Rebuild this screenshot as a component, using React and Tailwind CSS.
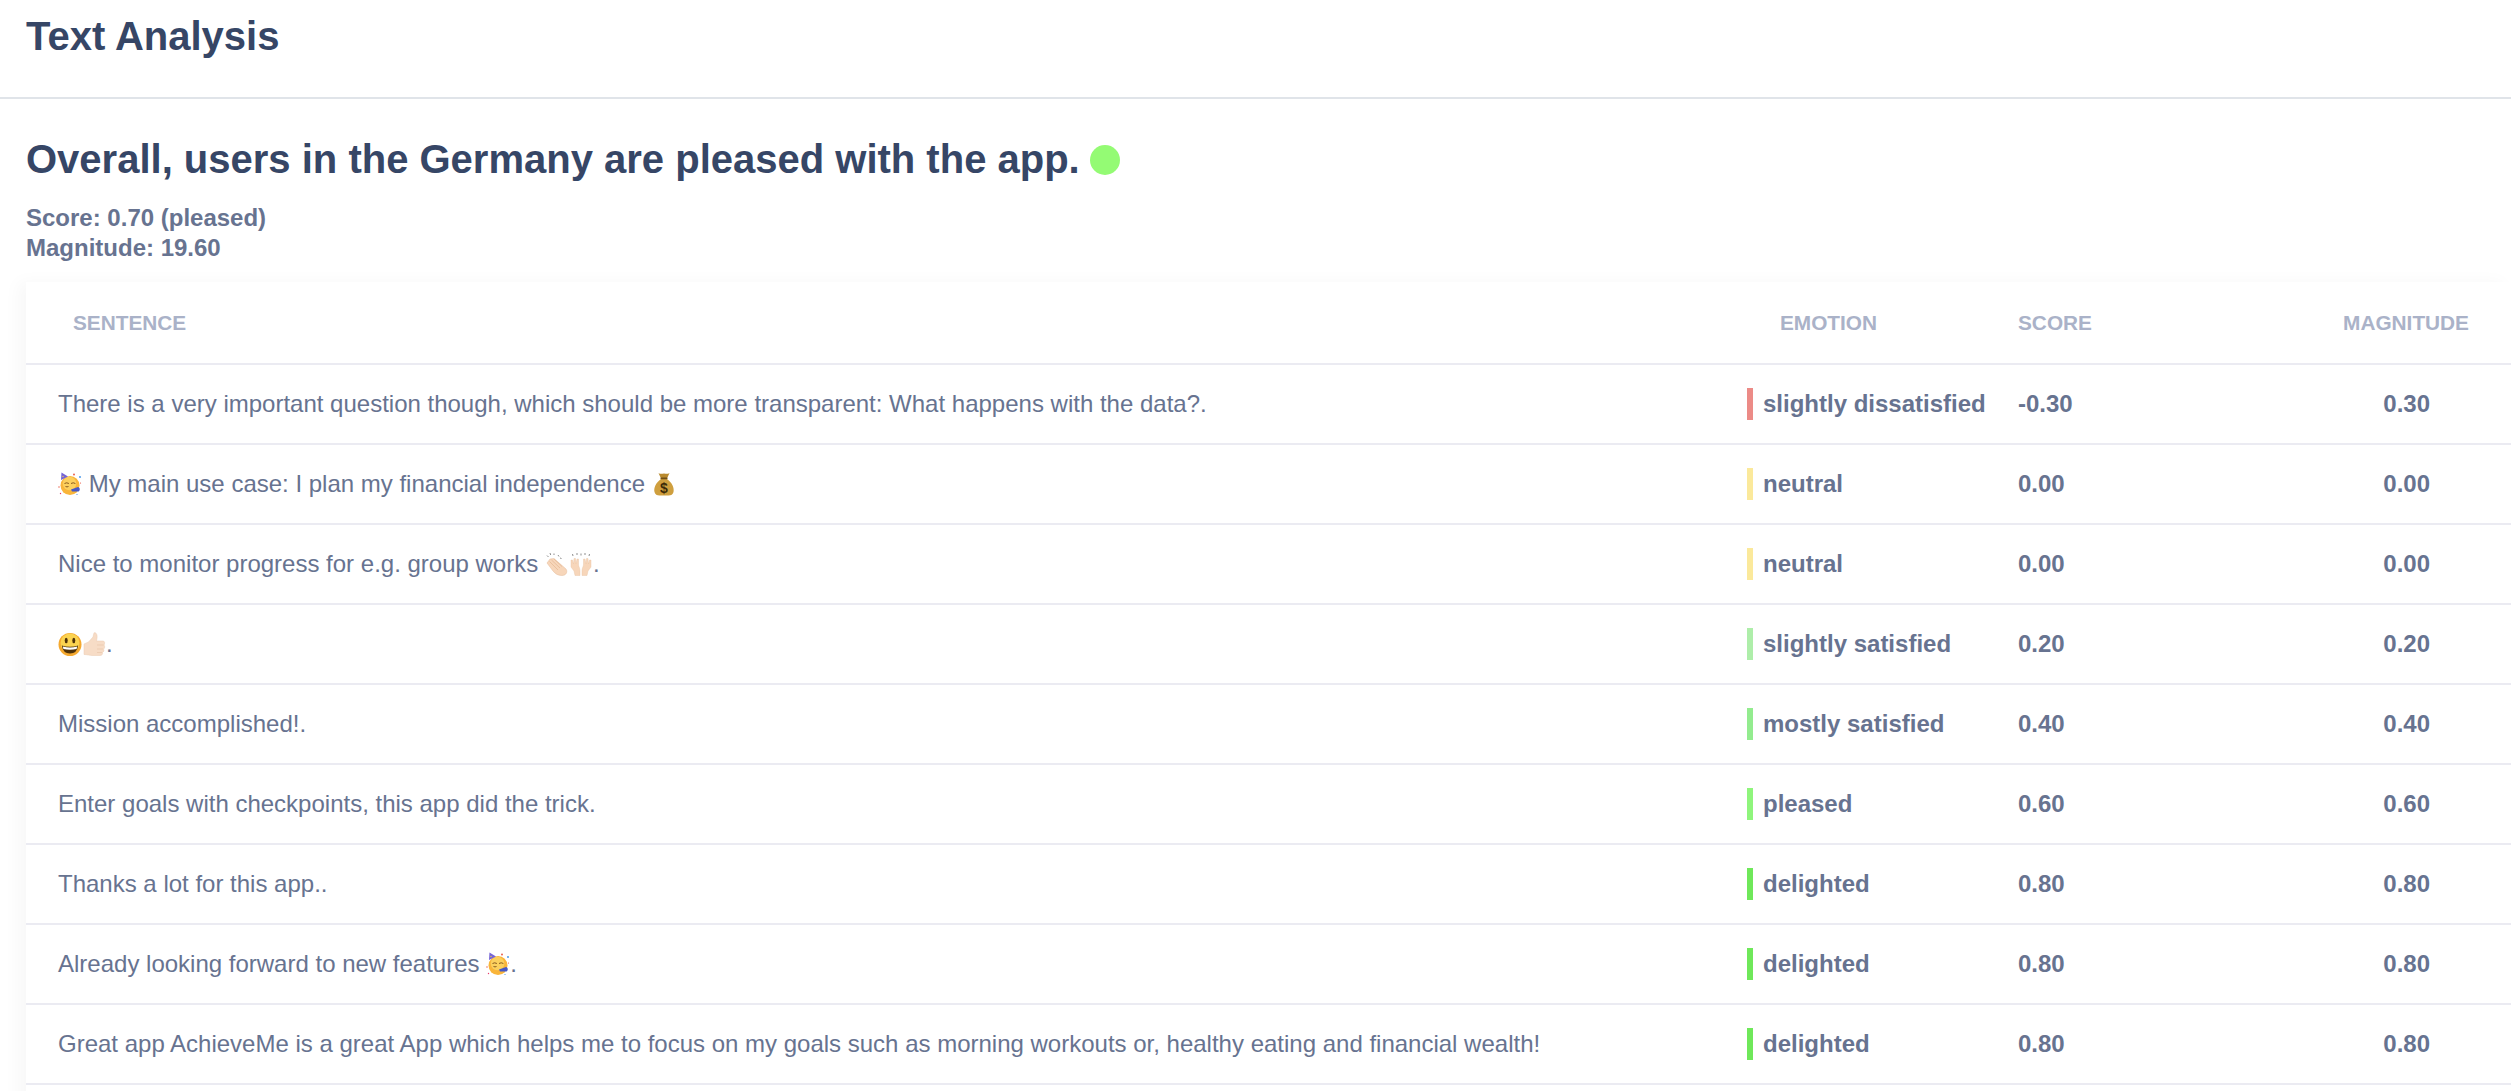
const rows = [
  { text: <>There is a very important question though, which should be more transparent: What happens with the data?.</>, emotion: "slightly dissatisfied", bar: "bg-[#ec8b87]", score: "-0.30", magnitude: "0.30" },
  { text: <><PartyFace /> My main use case: I plan my financial independence <MoneyBag /></>, emotion: "neutral", bar: "bg-[#fbe99b]", score: "0.00", magnitude: "0.00" },
  { text: <>Nice to monitor progress for e.g. group works <Clap /><Hands />.</>, emotion: "neutral", bar: "bg-[#fbe99b]", score: "0.00", magnitude: "0.00" },
  { text: <><Smiley /><Thumb />.</>, emotion: "slightly satisfied", bar: "bg-[#aeeeaa]", score: "0.20", magnitude: "0.20" },
  { text: <>Mission accomplished!.</>, emotion: "mostly satisfied", bar: "bg-[#93ec8f]", score: "0.40", magnitude: "0.40" },
  { text: <>Enter goals with checkpoints, this app did the trick.</>, emotion: "pleased", bar: "bg-[#8ff57c]", score: "0.60", magnitude: "0.60" },
  { text: <>Thanks a lot for this app..</>, emotion: "delighted", bar: "bg-[#6fe85a]", score: "0.80", magnitude: "0.80" },
  { text: <>Already looking forward to new features <PartyFace />.</>, emotion: "delighted", bar: "bg-[#6fe85a]", score: "0.80", magnitude: "0.80" },
  { text: <>Great app AchieveMe is a great App which helps me to focus on my goals such as morning workouts or, healthy eating and financial wealth!</>, emotion: "delighted", bar: "bg-[#6fe85a]", score: "0.80", magnitude: "0.80" },
];

function Emoji({ children }) {
  return (
    <svg viewBox="0 0 24 24" className="inline-block w-6 h-6 align-[-4px]">
      {children}
    </svg>
  );
}

function PartyFace() {
  return (
    <Emoji>
      <circle cx="12" cy="13.5" r="9.5" fill="#f9b53a" />
      <circle cx="11.5" cy="11.5" r="6.8" fill="#fbd05e" />
      <path d="M3 8 L3.5 0.5 L10 4.5 Z" fill="#7564d6" />
      <circle cx="5" cy="4.5" r="0.7" fill="#f2d04a" />
      <path d="M6.5 11.5 q2.2 -1.4 4.4 0 M13 11.5 q2.2 -1.4 4.4 0" stroke="#7a4c16" strokeWidth="0.9" fill="none" />
      <path d="M7.5 14.5 q1.5 0.8 3 0" stroke="#7a4c16" strokeWidth="0.9" fill="none" />
      <path d="M13 17.5 L20 15 C22 15.5 22.5 18 20.5 19.5 L14 19.5 Z" fill="#4658c6" />
      <circle cx="16" cy="2.5" r="0.9" fill="#e8503a" />
      <circle cx="22" cy="5" r="0.9" fill="#3a8fe8" />
      <circle cx="22.5" cy="11" r="0.6" fill="#e8503a" />
      <circle cx="1" cy="15" r="0.7" fill="#e8503a" />
      <circle cx="2.5" cy="21.5" r="0.7" fill="#e83a6a" />
      <circle cx="19" cy="22.5" r="0.6" fill="#3a8fe8" />
    </Emoji>
  );
}

function MoneyBag() {
  return (
    <Emoji>
      <path d="M6.5 1 C9 2.5 10 1.5 12 1.5 C14 1.5 15 2.5 17.5 1 L15 6.5 L9 6.5 Z" fill="#b98a2e" />
      <path d="M9 7 L15 7 C20 10.5 22.5 16 21.5 20 C21 22.5 19 23.5 16.5 23.5 L7.5 23.5 C5 23.5 3 22.5 2.5 20 C1.5 16 4 10.5 9 7 Z" fill="#cf9f3e" />
      <rect x="8.5" y="5.6" width="7" height="1.6" rx="0.6" fill="#6f4e16" />
      <text x="12" y="21" textAnchor="middle" fontSize="14" fontWeight="700" fontFamily="Liberation Sans, sans-serif" fill="#3c2a08">$</text>
    </Emoji>
  );
}

function Clap() {
  return (
    <Emoji>
      <path d="M2 11 L5 7 L9 6.5 L21 17 C23 20 21 23.5 17 23.5 C13 23.5 10.5 22 8 19 Z" fill="#f7d6ba" stroke="#e5bb98" strokeWidth="0.5" />
      <path d="M4.5 9.5 L13 18 M6.5 8 L15 16 M9 7 L17 14.5" stroke="#e2b692" strokeWidth="0.7" />
      <path d="M2 3.5 l1.5 1.5 M5 1 l0.7 2 M9 1.5 l0 1.5 M13 3 l1 1.5 M15 6 l1.5 0.5" stroke="#8f8f8f" strokeWidth="1" />
    </Emoji>
  );
}

function Hands() {
  return (
    <Emoji>
      <path d="M2 8 L3.5 8 L4.5 12 L5 6.5 L6.5 6.5 L7 12 L8 7 L9.5 7 L9.5 13 C10 15 11 16.5 11 19 L11 23.5 L6 23.5 L5 19 L2 15 Z" fill="#f7d6ba" stroke="#e8c3a2" strokeWidth="0.4" />
      <path d="M22 8 L20.5 8 L19.5 12 L19 6.5 L17.5 6.5 L17 12 L16 7 L14.5 7 L14.5 13 C14 15 13 16.5 13 19 L13 23.5 L18 23.5 L19 19 L22 15 Z" fill="#f7d6ba" stroke="#e8c3a2" strokeWidth="0.4" />
      <path d="M3.5 2 l0.5 2 M8 1 l0 2 M12 1.5 l0 2 M16 1 l0 2 M20.5 2 l-0.5 2" stroke="#8f8f8f" strokeWidth="1" />
    </Emoji>
  );
}

function Smiley() {
  return (
    <Emoji>
      <circle cx="12" cy="12.5" r="11.5" fill="#f5a92f" />
      <circle cx="12" cy="11" r="9.5" fill="#fbd350" />
      <ellipse cx="8.2" cy="8.5" rx="1.5" ry="2.7" fill="#4f3209" />
      <ellipse cx="15.8" cy="8.5" rx="1.5" ry="2.7" fill="#4f3209" />
      <path d="M3.8 13.5 Q12 16 20.2 13.5 Q19 21.5 12 21.5 Q5 21.5 3.8 13.5 Z" fill="#4f3209" />
      <path d="M4.8 14.4 Q12 16.4 19.2 14.4 L18.6 17 Q12 18.6 5.4 17 Z" fill="#fff" />
    </Emoji>
  );
}

function Thumb() {
  return (
    <Emoji>
      <path d="M2 12 L6.5 10 L11 5 L12 0.8 C14.5 0.3 15.5 3 15 6 L14.5 9 L21 9 C23 9 23 12 22 13 C23 14.5 23 16 21.5 17 C22.5 18.5 21.5 20 20.5 20.5 C21 22 20 23.5 18 23.5 L10 23.5 C8 23.5 5 22.5 2 22.5 Z" fill="#f7dcc6" stroke="#ebcbb1" strokeWidth="0.5" />
      <path d="M15 13 L21.5 13 M15 17 L21 17 M15 20.5 L20 20.5" stroke="#e8c6ab" strokeWidth="0.7" />
    </Emoji>
  );
}

export default function App() {
  return (
    <div className="h-[1091px] overflow-hidden bg-white font-['Liberation_Sans',sans-serif]">
      <div className="h-[99px] border-b-2 border-[#e0e4e9] px-[26px] pt-[11px]">
        <h1 className="text-[40px] leading-[50px] font-bold text-[#364666]">Text Analysis</h1>
      </div>
      <div className="pl-[26px] pt-[35px]">
        <h2 className="flex items-center gap-[10px] text-[40px] leading-[50px] font-bold text-[#364666]">
          Overall, users in the Germany are pleased with the app.
          <span className="w-[30px] h-[30px] rounded-full bg-[#94fb74] mt-[2px]"></span>
        </h2>
        <div className="mt-[19px] text-[24px] leading-[30px] font-bold text-[#677390]">
          <p>Score: 0.70 (pleased)</p>
          <p>Magnitude: 19.60</p>
        </div>
        <div className="mt-[19px] pb-[80px] shadow-[-8px_0_16px_rgba(0,0,0,0.03)]">
          <div className="grid grid-cols-[1721px_271px_1fr] h-[83px] items-center border-b-2 border-[#ebebf2] text-[20.8px] font-bold uppercase text-[#aab2c8]">
            <div className="pl-[47px]">Sentence</div>
            <div className="pl-[33px]">Emotion</div>
            <div className="flex justify-between pr-[42px]">
              <span>Score</span>
              <span>Magnitude</span>
            </div>
          </div>
          {rows.map((row, i) => (
            <div key={i} className="grid grid-cols-[1721px_271px_1fr] h-[80px] items-center border-b-2 border-[#ebebf2] text-[24px] text-[#677390]">
              <div className="pl-[32px]">{row.text}</div>
              <div className="flex items-center gap-[10px] font-bold">
                <span className={`w-[6px] h-[32px] ${row.bar}`}></span>
                {row.emotion}
              </div>
              <div className="flex justify-between pr-[81px] font-bold">
                <span>{row.score}</span>
                <span>{row.magnitude}</span>
              </div>
            </div>
          ))}
        </div>
      </div>
    </div>
  );
}
